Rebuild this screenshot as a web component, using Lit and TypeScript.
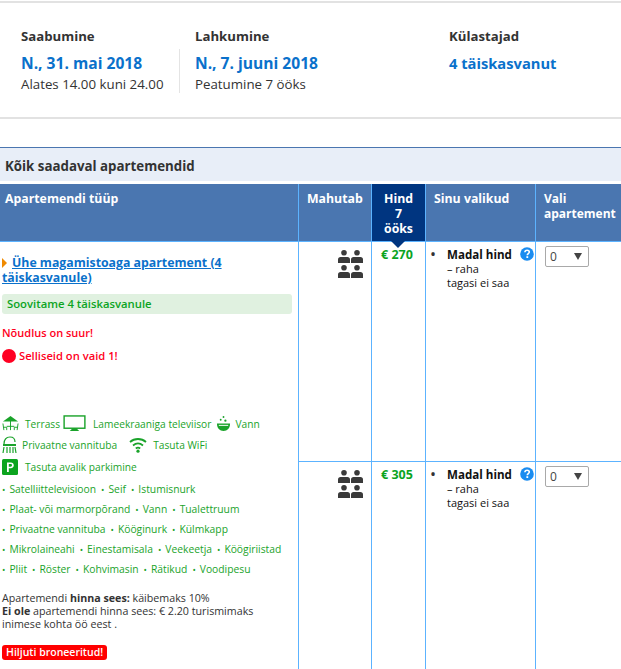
import { LitElement, html, css, svg } from "lit";
import { customElement } from "lit/decorators.js";

const people = svg`<svg class="people" viewBox="0 0 25 28" width="25" height="28">
${[[0,0],[13,0],[0,15],[13,15]].map(([x,y])=>svg`<g transform="translate(${x} ${y})" fill="#3a3a3a"><circle cx="6" cy="2.8" r="2.8"/><path d="M0 13V9.5C0 8 1 7 2.5 7H9.5C11 7 12 8 12 9.5V13Z"/></g>`)}
</svg>`;

const help = html`<svg class="help" viewBox="0 0 14 14" width="14" height="14"><circle cx="7" cy="7" r="6.8" fill="#1a8cf0"/><path d="M4.9 5.3C4.9 4 5.9 3.2 7.1 3.2C8.4 3.2 9.3 4 9.3 5.1C9.3 6.6 7.3 6.6 7.3 8.2" fill="none" stroke="#fff" stroke-width="1.6"/><rect x="6.4" y="9.2" width="1.8" height="1.8" fill="#fff"/></svg>`;

const terrace = html`<svg viewBox="0 0 18 18" width="17" height="17"><g fill="none" stroke="#1aa32a" stroke-width="1"><path d="M9 3V16M5 12H13M1 9L2 16M17 9L16 16M1.5 13H5V16M16.5 13H13V16"/></g><path d="M1 7L9 1L17 7Z" fill="#1aa32a"/></svg>`;
const tv = html`<svg viewBox="0 0 24 18" width="23" height="17"><rect x="1" y="1" width="22" height="13" fill="none" stroke="#1aa32a" stroke-width="1.5"/><path d="M7 17H17L14 14H10Z" fill="#1aa32a"/></svg>`;
const bath = html`<svg viewBox="0 0 16 18" width="15" height="17"><circle cx="8" cy="2" r="1" fill="#1aa32a"/><circle cx="5" cy="5" r="1" fill="#1aa32a"/><circle cx="10" cy="6" r="1.2" fill="#1aa32a"/><path d="M1 9H15C15 14 12 17 8 17C4 17 1 14 1 9Z" fill="#1aa32a"/><path d="M3 11H13" stroke="#fff" stroke-width="1"/></svg>`;
const shower = html`<svg viewBox="0 0 15 18" width="15" height="18"><g fill="none" stroke="#1aa32a" stroke-width="1.2"><path d="M2 8C2 3 5 1 8 1C11 1 13 3 13 6"/><path d="M2 11L1 17M5 11V17M8 11V17M11 11V17M13 11L14 17"/></g><path d="M1 8H14V10H1Z" fill="#1aa32a"/></svg>`;
const wifi = html`<svg viewBox="0 0 18 16" width="18" height="16"><g fill="none" stroke="#1aa32a" stroke-width="1.8"><path d="M1 5C5.5 1 12.5 1 17 5"/><path d="M4 8.5C7 6 11 6 14 8.5"/><path d="M6.8 11.5C8 10.6 10 10.6 11.2 11.5"/></g><circle cx="9" cy="14.2" r="1.6" fill="#1aa32a"/></svg>`;
const parking = html`<svg viewBox="0 0 16 16" width="16" height="16"><rect width="16" height="16" rx="1.5" fill="#0ca41f"/><path d="M5 13V3.5H8.8C10.7 3.5 11.8 4.6 11.8 6.3C11.8 8 10.7 9.2 8.8 9.2H6.8V13Z M6.8 5V7.7H8.5C9.5 7.7 10 7.2 10 6.3C10 5.5 9.5 5 8.5 5Z" fill="#fff" fill-rule="evenodd"/></svg>`;

const facilityRows = [
  ["Satelliittelevisioon", "Seif", "Istumisnurk"],
  ["Plaat- või marmorpõrand", "Vann", "Tualettruum"],
  ["Privaatne vannituba", "Kööginurk", "Külmkapp"],
  ["Mikrolaineahi", "Einestamisala", "Veekeetja", "Köögiriistad"],
  ["Pliit", "Röster", "Kohvimasin", "Rätikud", "Voodipesu"],
];

@customElement("app-root")
export class AppRoot extends LitElement {
  static styles = css`
    :host { display: block; width: 621px; height: 669px; overflow: hidden; background: #fff; font-family: "Open Sans", "Noto Sans", sans-serif; color: #333; }
    .summary { margin-top: 1px; height: 118px; box-sizing: border-box; border-top: 2px solid #e2e2e2; border-bottom: 2px solid #e2e2e2; display: flex; padding: 24px 0 0 21px; }
    .block { display: flex; flex-direction: column; }
    .b1 { width: 158px; }
    .b2 { width: 254px; }
    .label { font-size: 13.2px; font-weight: 700; line-height: 18px; height: 18px; color: #333; }
    .date { font-size: 15.6px; font-weight: 700; color: #0a71cb; line-height: 22px; margin-top: 7px; white-space: nowrap; }
    .date.guests { font-size: 14.7px; }
    .sub { font-size: 13.3px; color: #333; line-height: 18px; margin-top: 1px; white-space: nowrap; }
    .divider { width: 1px; height: 44px; margin-top: 22px; background: #e4e4e4; margin-right: 15px; }
    .band { margin-top: 28px; height: 34px; box-sizing: border-box; border-top: 1px solid #4a76b0; background: #e8eef8; font-size: 13.3px; font-weight: 700; color: #333; line-height: 37px; padding-left: 5px; }
    .grid { margin-top: 3px; display: grid; grid-template-columns: 299px 73px 54px 110px 85px; grid-template-rows: 58px 220px 300px; }
    .h { background: #4a76b0; color: #fff; font-weight: 700; font-size: 12.3px; line-height: 15px; padding: 7px 2px 0 8px; border-right: 1px solid #5cb3ff; border-bottom: 1px solid #5cb3ff; box-sizing: border-box; white-space: nowrap; }
    .h.last { border-right: 0; font-size: 12px; }
    .h.first { padding-left: 5px; }
    .h.price { background: #003580; text-align: center; padding: 7px 0 0; position: relative; }
    .h.price::after { content: ""; position: absolute; left: 19px; bottom: -7px; border: 7px solid transparent; border-top-color: #003580; border-bottom-width: 0; }
    .c { border-right: 1px solid #5cb3ff; border-bottom: 1px solid #5cb3ff; box-sizing: border-box; }
    .left { grid-row: 2 / 4; padding: 13px 6px 0 2px; border-bottom: 0; }
    .title { font-size: 12.3px; font-weight: 700; line-height: 15px; color: #0a71cb; margin: 0; }
    .title a { color: inherit; text-decoration: underline; }
    .tri { display: inline-block; border-left: 5px solid #f08a00; border-top: 5px solid transparent; border-bottom: 5px solid transparent; margin-right: 5px; vertical-align: -1px; }
    .rec { margin: 9px 0 0 0; height: 20px; border-radius: 3px; background: #e0f1e0; color: #0ca41f; font-size: 11.3px; font-weight: 600; line-height: 20px; padding-left: 5px; }
    .red { color: #ff0022; font-size: 11px; font-weight: 600; line-height: 14px; }
    .demand { margin-top: 12px; }
    .few { margin-top: 9px; display: flex; align-items: center; gap: 3px; font-size: 11.2px; }
    .dot { width: 14px; height: 14px; border-radius: 50%; background: #ff0022; }
    .icons { margin-top: 50px; color: #1aa32a; font-size: 10.2px; }
    .irow { display: flex; align-items: center; height: 21.5px; white-space: nowrap; }
    .irow svg { flex: none; display: block; }
    .g3 { margin-left: 3px; }
    .g4 { margin-left: 4px; }
    .g5 { margin-left: 5px; }
    .g6 { margin-left: 6px; }
    .g7 { margin-left: 7px; }
    .g12 { margin-left: 12px; }
    .fac { margin-top: 1px; color: #1aa32a; font-size: 10.3px; }
    .frow { display: flex; gap: 5px; height: 20px; line-height: 20px; white-space: nowrap; }
    .frow span::before { content: "•"; margin-right: 4px; font-size: 9px; }
    .note { margin-top: 13px; font-size: 10.7px; line-height: 13px; color: #333; white-space: nowrap; }
    .badge { display: inline-block; margin-top: 14px; background: #ff0000; color: #fff; border-radius: 3px; font-size: 10.5px; font-weight: 600; line-height: 15px; padding: 0 4px; }
    .cap { display: flex; justify-content: flex-end; padding: 8px 8px 0 0; }
    .people { display: block; }
    .p { color: #0ca41f; font-size: 12.5px; font-weight: 700; line-height: 15px; padding: 5px 0 0 9px; }
    .opt { padding: 5px 0 0 4px; display: flex; color: #111; font-size: 11px; line-height: 13.5px; }
    .bul { width: 17px; font-size: 16px; color: #333; line-height: 14px; flex: none; }
    .opt b { font-size: 11.6px; display: inline-block; margin-right: 8px; font-weight: 700; line-height: 14px; }
    .nowrap { white-space: nowrap; }
    .help { vertical-align: -2px; }
    .pick { padding: 4px 0 0 9px; border-right: 0; }
    .sel { width: 44px; height: 21px; border: 1px solid #a9a9a9; border-radius: 2px; box-sizing: border-box; display: flex; justify-content: space-between; padding: 1px 6px 0 4px; font-size: 12px; line-height: 18px; color: #444; }
    .sel::after { content: ""; border-left: 4px solid transparent; border-right: 4px solid transparent; border-top: 7px solid #444; margin-top: 5px; }
  `;

  private option() {
    return html`<div class="opt"><div class="bul">•</div><div class="nowrap"><b>Madal hind</b>${help}<br />– raha<br />tagasi ei saa</div></div>`;
  }

  render() {
    return html`
      <div class="summary">
        <div class="block b1"><div class="label">Saabumine</div><div class="date">N., 31. mai 2018</div><div class="sub">Alates 14.00 kuni 24.00</div></div>
        <div class="divider"></div>
        <div class="block b2"><div class="label">Lahkumine</div><div class="date">N., 7. juuni 2018</div><div class="sub">Peatumine 7 ööks</div></div>
        <div class="block"><div class="label">Külastajad</div><div class="date guests">4 täiskasvanut</div></div>
      </div>
      <div class="band">Kõik saadaval apartemendid</div>
      <div class="grid">
        <div class="h first">Apartemendi tüüp</div>
        <div class="h">Mahutab</div>
        <div class="h price">Hind<br />7<br />ööks</div>
        <div class="h">Sinu valikud</div>
        <div class="h last">Vali<br />apartement</div>

        <div class="c left">
          <p class="title"><span class="tri"></span><a href="#">Ühe magamistoaga apartement (4 täiskasvanule)</a></p>
          <div class="rec">Soovitame 4 täiskasvanule</div>
          <div class="red demand">Nõudlus on suur!</div>
          <div class="red few"><span class="dot"></span>Selliseid on vaid 1!</div>
          <div class="icons">
            <div class="irow">${terrace}<span class="g6">Terrass</span><span class="g3">${tv}</span><span class="g7">Lameekraaniga televiisor</span><span class="g5">${bath}</span><span class="g4">Vann</span></div>
            <div class="irow">${shower}<span class="g5">Privaatne vannituba</span><span class="g12">${wifi}</span><span class="g6">Tasuta WiFi</span></div>
            <div class="irow">${parking}<span class="g7">Tasuta avalik parkimine</span></div>
          </div>
          <div class="fac">${facilityRows.map((r) => html`<div class="frow">${r.map((t) => html`<span>${t}</span>`)}</div>`)}</div>
          <div class="note">Apartemendi <strong>hinna sees:</strong> käibemaks 10%<br /><strong>Ei ole</strong> apartemendi hinna sees: € 2.20 turismimaks<br />inimese kohta öö eest .</div>
          <div class="badge">Hiljuti broneeritud!</div>
        </div>
        <div class="c cap">${people}</div>
        <div class="c p">€ 270</div>
        <div class="c">${this.option()}</div>
        <div class="c pick"><div class="sel">0</div></div>

        <div class="c cap">${people}</div>
        <div class="c p">€ 305</div>
        <div class="c">${this.option()}</div>
        <div class="c pick"><div class="sel">0</div></div>
      </div>
    `;
  }
}
